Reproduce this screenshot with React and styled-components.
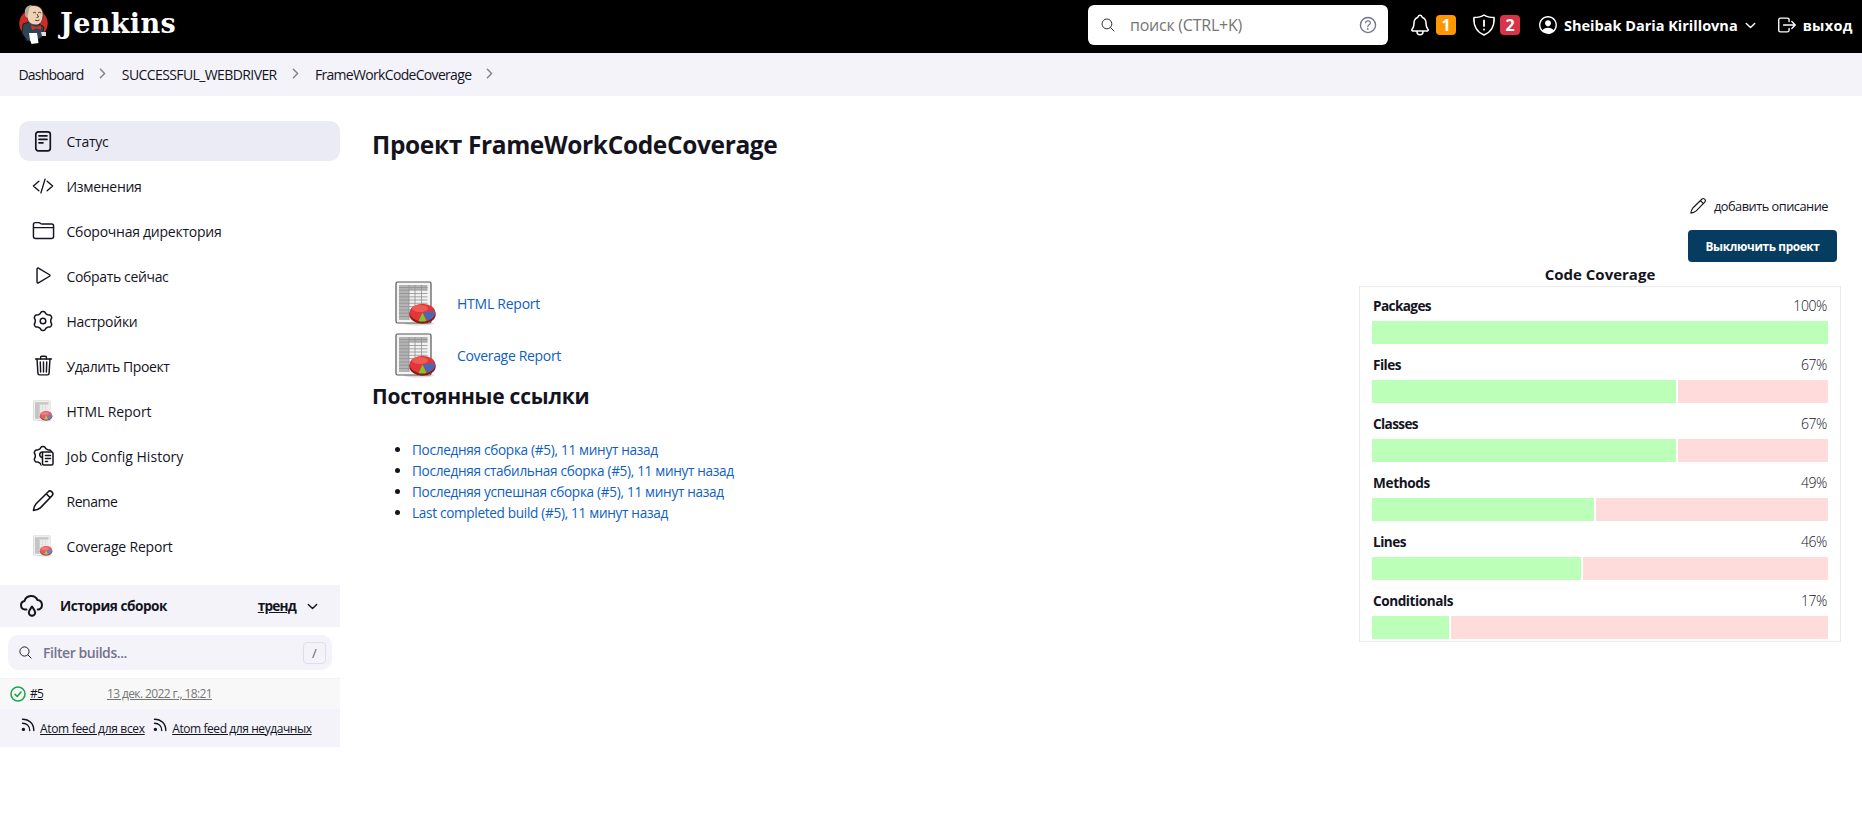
import React from "react";
import styled, { createGlobalStyle } from "styled-components";
import {
  IoSearchOutline,
  IoHelpCircleOutline,
  IoNotificationsOutline,
  IoPersonCircleOutline,
  IoLogOutOutline,
  IoChevronDown,
  IoChevronForward,
  IoCodeSlashOutline,
  IoFolderOutline,
  IoPlayOutline,
  IoTrashOutline,
} from "react-icons/io5";

const Global = createGlobalStyle`
  *, *::before, *::after { box-sizing: border-box; }
  body { margin: 0; background: #fff; color: #14141f; font-family: "Open Sans", "Noto Sans", sans-serif; font-size: 14px; }
  a { color: inherit; }
`;

const Text = styled.span`
  letter-spacing: ${(p) => p.$ls || 0}px;
  white-space: nowrap;
`;

/* ---------- header ---------- */
const Header = styled.header`
  display: flex;
  align-items: flex-start;
  height: 53px;
  padding-left: 18px;
  background: #000;
  color: #fff;
`;
const Brand = styled.div`
  display: flex;
  flex: 1;
  gap: 12px;
  padding-top: 4px;
`;
const Wordmark = styled.span`
  padding-top: 2px;
  font: 700 27px/36px "DejaVu Serif", serif;
`;
const SearchBox = styled.div`
  display: flex;
  align-items: center;
  width: 300px;
  height: 40px;
  margin-top: 5px;
  padding: 0 9px 0 12px;
  border-radius: 6px;
  background: #fff;
  color: #333;
`;
const SearchHint = styled.span`
  flex: 1;
  margin-left: 14px;
  color: #757575;
  font-size: 16px;
`;
const HeaderTools = styled.div`
  display: flex;
  align-items: center;
  height: 40px;
  margin-top: 5px;
  width: 474px;
  padding-left: 20px;
`;
const Tool = styled.div`
  display: flex;
  align-items: center;
  gap: ${(p) => p.$gap}px;
  margin-right: ${(p) => p.$mr || 0}px;
`;
const Badge = styled.span`
  width: 20px;
  height: 20px;
  border-radius: 4px;
  background: ${(p) => p.$bg};
  font-size: 16px;
  font-weight: 700;
  line-height: 21px;
  text-align: center;
`;
const HeaderText = styled.span`
  font-size: 14.5px;
  font-weight: 700;
`;

/* ---------- breadcrumbs ---------- */
const Crumbs = styled.nav`
  display: flex;
  align-items: center;
  height: 43px;
  padding: 0 0 1px 18.5px;
  background: #f3f3f9;
`;
const Crumb = styled.span`
  font-size: 14px;
`;
const CrumbArrow = styled(IoChevronForward)`
  flex: none;
  width: 15px;
  height: 15px;
  margin: 0 12.3px 1px 11px;
  color: #80808a;
`;

/* ---------- side panel ---------- */
const Page = styled.div`
  display: flex;
  align-items: flex-start;
`;
const Side = styled.aside`
  width: 340px;
  padding-top: 25px;
`;
const Tasks = styled.div`
  display: flex;
  flex-direction: column;
  gap: 5px;
  margin-left: 19px;
`;
const Task = styled.div`
  display: flex;
  align-items: center;
  height: 40px;
  border-radius: 10px;
  background: ${(p) => (p.$active ? "#ebebf5" : "transparent")};
`;
const TaskIcon = styled.span`
  display: flex;
  align-items: center;
  justify-content: center;
  width: 24px;
  height: 24px;
  margin: 0 11.5px 1px 12px;
`;
const TaskLabel = styled.span`
  font-size: 14px;
  font-weight: 500;
`;
const HistoryHead = styled.div`
  display: flex;
  align-items: center;
  height: 42px;
  margin-top: 19px;
  padding: 0 20px 0 19px;
  background: #f3f3f9;
`;
const HistoryTitle = styled.span`
  flex: 1;
  margin-left: 15px;
  padding-bottom: 2px;
  font-size: 13.6px;
  font-weight: 700;
`;
const Trend = styled.a`
  margin-right: 9px;
  padding-bottom: 2px;
  font-size: 13.6px;
  font-weight: 700;
  text-decoration: underline;
`;
const Filter = styled.div`
  display: flex;
  align-items: center;
  height: 35px;
  margin: 8px 8px 8px;
  padding: 0 6px 0 10px;
  border-radius: 10px;
  background: #f3f3f9;
`;
const FilterHint = styled.span`
  flex: 1;
  margin-left: 10px;
  color: #73738c;
  font-size: 14px;
  font-weight: 600;
`;
const Slash = styled.kbd`
  width: 23px;
  height: 22px;
  border: 1px solid #dfdfeb;
  border-radius: 4px;
  color: #62626e;
  font: 13px/20px "Open Sans", sans-serif;
  text-align: center;
`;
const BuildRow = styled.div`
  display: flex;
  align-items: center;
  height: 31px;
  padding-left: 10px;
  border-top: 1px solid #f2f2f2;
  background: #f8f8f8;
  font-size: 12px;
`;
const BuildNo = styled.a`
  width: 77px;
  margin-left: 4px;
  padding-bottom: 2px;
  text-decoration: underline;
`;
const BuildDate = styled.a`
  padding-bottom: 2px;
  color: #777;
  text-decoration: underline;
`;
const Feeds = styled.div`
  display: flex;
  align-items: center;
  height: 38px;
  padding-left: 21px;
  background: #f3f3f9;
  font-size: 12px;
`;
const Feed = styled.a`
  display: flex;
  align-items: center;
  gap: 5px;
  margin-right: 8.5px;
  text-decoration: underline;
  svg { margin-bottom: 7px; }
`;

/* ---------- main column ---------- */
const Main = styled.main`
  flex: 1;
  padding: 30px 21px 0 32px;
`;
const Title = styled.h1`
  margin: 0;
  font-size: 24.5px;
  font-weight: 700;
  line-height: 38px;
`;
const Columns = styled.div`
  display: flex;
  justify-content: space-between;
`;
const Content = styled.section`
  padding-top: 113px;
`;
const Report = styled.div`
  display: flex;
  align-items: center;
  height: 52px;
  padding-left: 23px;
  gap: 20px;
`;
const Link = styled.a`
  color: #0f60c0;
  font-weight: 500;
`;
const SubTitle = styled.h2`
  margin: -1px 0 0;
  font-size: 21px;
  font-weight: 700;
  line-height: 32px;
`;
const Permalinks = styled.ul`
  margin: 27px 0 0;
  padding-left: 40px;
`;
const Permalink = styled.li`
  height: 21px;
  font-size: 13.6px;
  line-height: 21px;
`;
const Panel = styled.section`
  display: flex;
  flex-direction: column;
  width: 482px;
  padding-top: 32px;
`;
const AddNote = styled.a`
  display: flex;
  align-items: center;
  align-self: flex-end;
  gap: 7px;
  height: 20px;
  margin-right: 13px;
  font-size: 12.8px;
`;
const DisableButton = styled.button`
  align-self: flex-end;
  width: 149px;
  height: 32px;
  margin: 14px 4px 0 0;
  padding: 0;
  border: 0;
  border-radius: 4px;
  background: #063c5f;
  color: #fff;
  font: 700 11.8px "Open Sans", sans-serif;
`;
const ChartTitle = styled.div`
  height: 24px;
  font-size: 15px;
  font-weight: 700;
  line-height: 25px;
  text-align: center;
`;
const Chart = styled.div`
  height: 356px;
  padding: 3px 12px 0;
  border: 1px solid #ebebeb;
`;
const Metric = styled.div`
  height: 59px;
  padding-top: 8px;
`;
const MetricHead = styled.div`
  display: flex;
  justify-content: space-between;
  height: 23px;
  padding: 0 1px;
  line-height: 16px;
`;
const MetricName = styled.span`
  font-size: 13.6px;
  font-weight: 700;
`;
const MetricValue = styled.span`
  font-weight: 300;
`;
const Bar = styled.div`
  display: flex;
  gap: 2px;
  height: 23px;
`;
const Covered = styled.div`
  flex: ${(p) => p.$n} 0 0;
  background: #bbffb9;
`;
const Missed = styled.div`
  flex: ${(p) => p.$n} 0 0;
  background: #fedcdc;
`;

/* ---------- drawings ---------- */
const line = { fill: "none", stroke: "currentColor", strokeLinecap: "round", strokeLinejoin: "round" };

const gearPath = (() => {
  const pts = [];
  for (let i = 0; i < 120; i++) {
    const a = (i / 120) * Math.PI * 2;
    const r = 8.6 + 0.9 * Math.tanh(1.8 * Math.cos(6 * a));
    pts.push(`${(12 + r * Math.sin(a)).toFixed(2)} ${(12 - r * Math.cos(a)).toFixed(2)}`);
  }
  return `M${pts.join("L")}Z`;
})();

const Butler = () => (
  <svg width="30" height="40" viewBox="0 0 30 40">
    <ellipse cx="15.5" cy="19.5" rx="14.2" ry="14" fill="#cf2b26" />
    <path d="M5 20l6-2 10 2 5 3-2 10-6 4H9l-5-8z" fill="#2d4453" stroke="#0c1418" strokeWidth=".8" />
    <path d="M8 11C6 5 10 1 16 1.500c6 .3 9.500 4 9 10-.2 6-3 9.500-7 9.500-5 0-8-3-8.500-6z" fill="#efd1b4" stroke="#2b2320" strokeWidth=".7" />
    <path d="M7 9c-1-4 2-8 7-8-2 2-3 3-3.500 7L9 14C7.500 13 6.500 11 7 9z" fill="#b0a797" />
    <path d="M15 9q1.500-1.500 3 0M20 9q1.500-1.500 3 0M19 10l1.500 3-2 .5M17 16q2 1.500 4.500 0" fill="none" stroke="#3b2b22" strokeWidth=".9" />
    <path d="M13 21l5 2 5-1.500v4L18 24.500 14 26z" fill="#d3302c" />
    <path d="M11 29h8l1.500 10-7 1-1.500-4z" fill="#fff" />
    <path d="M23 28h5v4h-4z" fill="#ddd" />
  </svg>
);

const Shield = () => (
  <svg width="24" height="24" viewBox="0 0 24 24" {...line} strokeWidth="1.5">
    <path d="M12 2C9.500 3.800 5.500 4.600 1.900 4.600 1.600 12 4 18.800 12 22c8-3.200 10.400-10 10.100-17.400C18.500 4.600 14.500 3.800 12 2z" />
    <path d="M12 7.500v5.500M12 16.500v.2" strokeWidth="1.800" />
  </svg>
);
const StatusDoc = () => (
  <svg width="24" height="24" viewBox="0 0 24 24" {...line} strokeWidth="1.700">
    <rect x="4.800" y="2.800" width="14.500" height="19" rx="2.500" />
    <path d="M8 6.800h8M8 10.300h8M8 13.800h4" />
  </svg>
);
const Gear = () => (
  <svg width="24" height="24" viewBox="0 0 24 24" {...line} strokeWidth="1.500">
    <path d={gearPath} />
    <circle cx="12" cy="12" r="2.800" />
  </svg>
);
const GearDoc = () => (
  <svg width="24" height="24" viewBox="0 0 24 24" {...line} strokeWidth="1.500">
    <path d={gearPath} />
    <path d="M10.500 8h13v15h-13z" fill="#fff" stroke="none" />
    <path d="M20 8h-8.500a2.800 2.800 0 1 0 0 5.600M11.500 8v11.500a1.500 1.500 0 0 0 1.500 1.500h7.500a1.500 1.500 0 0 0 1.500-1.500V9.500A1.500 1.500 0 0 0 20.500 8zM14.500 11.500h5M14.500 14.500h5M14.500 17.500h2" />
  </svg>
);
const Pencil = ({ size = 24, weight = 1.6 }) => (
  <svg width={size} height={size} viewBox="0 0 24 24" {...line} strokeWidth={weight}>
    <path d="M2.500 21.500c.2-2.500 1-5 2.600-6.800L17 3a2.600 2.600 0 0 1 4 3.700L9.600 18.600c-1.700 1.600-4.600 2.600-7.100 2.900zM15.200 4.800l4 4" />
  </svg>
);
const Cloud = () => (
  <svg width="26" height="24" viewBox="0 0 26 24" {...line} strokeWidth="2">
    <path d="M7.500 15.500H6A4.300 4.300 0 0 1 5.500 7 7 7 0 0 1 18.500 6a4.900 4.900 0 0 1 1.200 9.500h-1" />
    <path d="M13 12.500c-1.500 2.200-3.200 4-3.200 6.100a3.200 3.200 0 0 0 6.400 0c0-2.100-1.700-3.900-3.200-6.100z" />
  </svg>
);
const Check = () => (
  <svg width="16" height="16" viewBox="0 0 16 16" {...line} strokeWidth="1.600" stroke="#1ea64b">
    <circle cx="8" cy="8" r="7" />
    <path d="M5 8.400l2.200 2L11 6" />
  </svg>
);
const Rss = () => (
  <svg width="14" height="14" viewBox="0 0 14 14" {...line} strokeWidth="1.400">
    <circle cx="2.400" cy="11.400" r="1" fill="currentColor" />
    <path d="M1.500 5.300c4.300 0 7.200 2.900 7.200 7.200M1.500 1.200c6.700 0 11.300 4.600 11.300 11.300" />
  </svg>
);
const Sheet = ({ w, h, faded }) => (
  <svg width={w} height={h} viewBox="0 0 42 45" opacity={faded ? 0.8 : 1}>
    <ellipse cx="24" cy="42.500" rx="15" ry="2" fill="#ddd" />
    <rect x="1" y="1" width="35" height="41" rx="1.500" fill="#f4f4f4" stroke={faded ? "#bbb" : "#555"} strokeWidth="1.200" />
    <rect x="4" y="4" width="28.500" height="35" fill="#f1f1f1" />
    <path d="M4 4h28.500v5H14v30H4z" fill="#b3b3b3" />
    <path
      d="M4 6.500h28.500M4 9.200h28.500M4 12.500h28.500M4 15.800h28.500M4 19h28.500M4 22.300h28.500M4 25.600h28.500M4 29h28.500M4 32.200h28.500M4 35.500h28.500M14 4v35M20 4v35M26.500 4v35"
      stroke={faded ? "#c4c4c4" : "#909090"}
      strokeWidth=".8"
    />
    <ellipse cx="27.500" cy="33.300" rx="13.200" ry="9.500" fill="#8f1717" />
    <ellipse cx="27.500" cy="31.500" rx="12.700" ry="8.800" fill="#e23636" />
    <ellipse cx="25" cy="27.500" rx="8" ry="3.500" fill="#f05a55" />
    <path d="M27.500 31.500L39.500 30Q40.500 37 33 39.500z" fill="#4668b5" />
    <path d="M27.500 31.500L31.500 40q-3 1-8 .3z" fill="#79c832" />
  </svg>
);

/* ---------- data ---------- */
const tasks = [
  { label: "Статус", ls: -0.25, icon: <StatusDoc />, active: true },
  { label: "Изменения", ls: -0.31, icon: <IoCodeSlashOutline size={22} /> },
  { label: "Сборочная директория", ls: -0.25, icon: <IoFolderOutline size={23} /> },
  { label: "Собрать сейчас", ls: -0.35, icon: <IoPlayOutline size={23} /> },
  { label: "Настройки", ls: -0.27, icon: <Gear /> },
  { label: "Удалить Проект", ls: -0.41, icon: <IoTrashOutline size={23} /> },
  { label: "HTML Report", ls: -0.07, icon: <Sheet w={20} h={22} faded /> },
  { label: "Job Config History", ls: 0.03, icon: <GearDoc /> },
  { label: "Rename", ls: -0.45, icon: <Pencil /> },
  { label: "Coverage Report", ls: -0.19, icon: <Sheet w={20} h={22} faded /> },
];
const permalinks = [
  ["Последняя сборка (#5), 11 минут назад", -0.3],
  ["Последняя стабильная сборка (#5), 11 минут назад", -0.32],
  ["Последняя успешная сборка (#5), 11 минут назад", -0.3],
  ["Last completed build (#5), 11 минут назад", -0.31],
];
const metrics = [
  ["Packages", 100, -0.61],
  ["Files", 67, -0.5],
  ["Classes", 67, -0.62],
  ["Methods", 49, -0.36],
  ["Lines", 46, -0.5],
  ["Conditionals", 17, -0.44],
];

export default function App() {
  return (
    <>
      <Global />
      <Header>
        <Brand>
          <Butler />
          <Wordmark><Text $ls={0.37}>Jenkins</Text></Wordmark>
        </Brand>
        <SearchBox>
          <IoSearchOutline size={16} />
          <SearchHint><Text $ls={-0.24}>поиск (CTRL+K)</Text></SearchHint>
          <IoHelpCircleOutline size={22} color="#73738c" />
        </SearchBox>
        <HeaderTools>
          <Tool $gap={4} $mr={16}>
            <IoNotificationsOutline size={24} />
            <Badge $bg="#ff9800">1</Badge>
          </Tool>
          <Tool $gap={4} $mr={17}>
            <Shield />
            <Badge $bg="#d9334a">2</Badge>
          </Tool>
          <Tool $gap={5} $mr={18}>
            <IoPersonCircleOutline size={22} />
            <HeaderText><Text>Sheibak Daria Kirillovna</Text></HeaderText>
            <IoChevronDown size={15} />
          </Tool>
          <Tool $gap={5}>
            <IoLogOutOutline size={22} />
            <HeaderText><Text $ls={0.31}>выход</Text></HeaderText>
          </Tool>
        </HeaderTools>
      </Header>
      <Crumbs>
        <Crumb><Text $ls={-0.8}>Dashboard</Text></Crumb>
        <CrumbArrow />
        <Crumb><Text $ls={-0.6}>SUCCESSFUL_WEBDRIVER</Text></Crumb>
        <CrumbArrow />
        <Crumb><Text $ls={-0.68}>FrameWorkCodeCoverage</Text></Crumb>
        <CrumbArrow />
      </Crumbs>
      <Page>
        <Side>
          <Tasks>
            {tasks.map((t) => (
              <Task key={t.label} $active={t.active}>
                <TaskIcon>{t.icon}</TaskIcon>
                <TaskLabel><Text $ls={t.ls}>{t.label}</Text></TaskLabel>
              </Task>
            ))}
          </Tasks>
          <HistoryHead>
            <Cloud />
            <HistoryTitle><Text $ls={-0.46}>История сборок</Text></HistoryTitle>
            <Trend><Text $ls={-0.8}>тренд</Text></Trend>
            <IoChevronDown size={15} />
          </HistoryHead>
          <Filter>
            <IoSearchOutline size={15} />
            <FilterHint><Text $ls={-0.44}>Filter builds...</Text></FilterHint>
            <Slash>/</Slash>
          </Filter>
          <BuildRow>
            <Check />
            <BuildNo><Text $ls={-0.8}>#5</Text></BuildNo>
            <BuildDate><Text $ls={-0.62}>13 дек. 2022 г., 18:21</Text></BuildDate>
          </BuildRow>
          <Feeds>
            <Feed><Rss /><Text $ls={-0.32}>Atom feed для всех</Text></Feed>
            <Feed><Rss /><Text $ls={-0.42}>Atom feed для неудачных</Text></Feed>
          </Feeds>
        </Side>
        <Main>
          <Title><Text $ls={-0.37}>Проект FrameWorkCodeCoverage</Text></Title>
          <Columns>
            <Content>
              <Report><Sheet w={42} h={45} /><Link><Text $ls={-0.25}>HTML Report</Text></Link></Report>
              <Report><Sheet w={42} h={45} /><Link><Text $ls={-0.33}>Coverage Report</Text></Link></Report>
              <SubTitle><Text $ls={-0.22}>Постоянные ссылки</Text></SubTitle>
              <Permalinks>
                {permalinks.map(([t, ls]) => (
                  <Permalink key={t}><Link><Text $ls={ls}>{t}</Text></Link></Permalink>
                ))}
              </Permalinks>
            </Content>
            <Panel>
              <AddNote><Pencil size={18} weight={1.5} /><Text $ls={-0.5}>добавить описание</Text></AddNote>
              <DisableButton><Text $ls={-0.35}>Выключить проект</Text></DisableButton>
              <ChartTitle><Text>Code Coverage</Text></ChartTitle>
              <Chart>
                {metrics.map(([name, v, ls]) => (
                  <Metric key={name}>
                    <MetricHead>
                      <MetricName><Text $ls={ls}>{name}</Text></MetricName>
                      <MetricValue><Text $ls={-0.4}>{v}%</Text></MetricValue>
                    </MetricHead>
                    <Bar>
                      <Covered $n={v} />
                      {v < 100 && <Missed $n={100 - v} />}
                    </Bar>
                  </Metric>
                ))}
              </Chart>
            </Panel>
          </Columns>
        </Main>
      </Page>
    </>
  );
}
